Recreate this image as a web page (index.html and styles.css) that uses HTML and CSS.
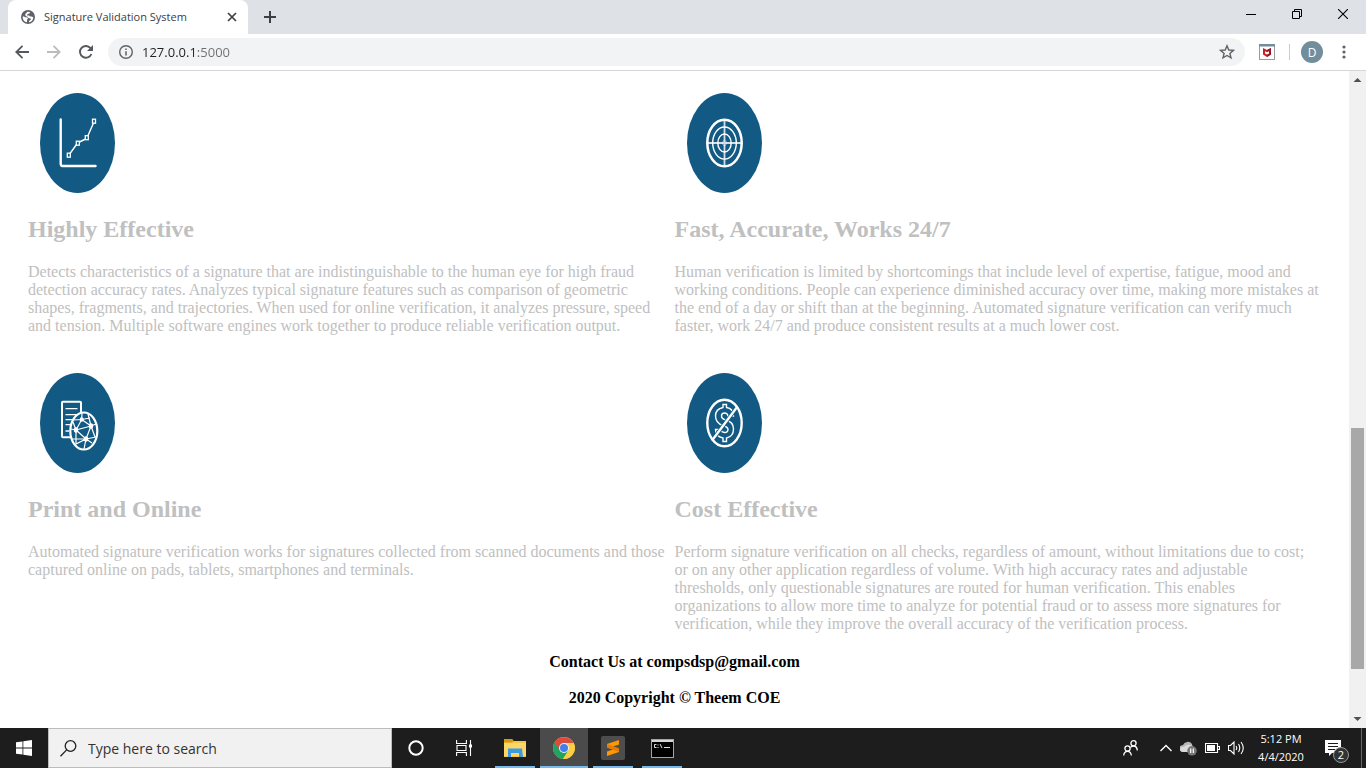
FILE: index.html
```html
<!DOCTYPE html>
<html lang="en">
<head>
<meta charset="utf-8">
<title>Signature Validation System</title>
<link rel="stylesheet" href="styles.css">
</head>
<body>
<div class="desktop">
  <header class="tabstrip">
    <div class="tab">
      <svg class="favicon" width="14" height="14" viewBox="0 0 14 14"><circle cx="7" cy="7" r="7" fill="#5f6368"/><path d="M2 6.2 4.500 7.200 6.500 7.500 7 9 6 9.500 6 12.300A5.400 5.400 0 0 1 1.700 7ZM6.500 1.800 9 2 8.500 3.500 6.500 4 6 5.500 8 5.500 9 6.500 11 6.500 12.300 7.500A5.400 5.400 0 0 1 8 12.300L8 11 10 9.500 9.500 8.500 7.500 8 6.500 6.800 4.500 6 4.300 4Z" fill="#fff"/></svg>
      <span class="tab-title">Signature Validation System</span>
      <button class="icon-btn tab-close" aria-label="Close tab"><svg width="10" height="10" viewBox="0 0 10 10"><path d="M1 1 9 9M9 1 1 9" stroke="#3c4043" stroke-width="1.700"/></svg></button>
    </div>
    <button class="icon-btn new-tab" aria-label="New tab"><svg width="12" height="12" viewBox="0 0 12 12"><path d="M6 0V12M0 6H12" stroke="#3c4043" stroke-width="2"/></svg></button>
    <div class="window-controls">
      <button class="icon-btn" aria-label="Minimize"><svg width="10" height="11" viewBox="0 0 10 11"><path d="M0 5.500H10" stroke="#000"/></svg></button>
      <button class="icon-btn" aria-label="Restore"><svg width="10" height="10" viewBox="0 0 10 10" fill="none" stroke="#000"><path d="M.5 2.500H7.500V9.500H.5ZM2.500 2.500V.5H9.500V7.500H7.500"/></svg></button>
      <button class="icon-btn" aria-label="Close window"><svg width="10" height="10" viewBox="0 0 10 10"><path d="M0 0 10 10M10 0 0 10" stroke="#000" stroke-width="1.100"/></svg></button>
    </div>
  </header>

  <nav class="toolbar" aria-label="Browser toolbar">
    <button class="icon-btn nav-btn" aria-label="Back"><svg width="14" height="14" viewBox="0 0 14 14"><path d="M14 7H1.500M7.500 .8 1.300 7 7.500 13.200" fill="none" stroke="#55585d" stroke-width="1.800"/></svg></button>
    <button class="icon-btn nav-btn" aria-label="Forward"><svg width="14" height="14" viewBox="0 0 14 14"><path d="M0 7H12.500M6.500 .8 12.700 7 6.500 13.200" fill="none" stroke="#babcbe" stroke-width="1.800"/></svg></button>
    <button class="icon-btn nav-btn" aria-label="Reload"><svg width="14" height="14" viewBox="0 0 14 14"><path d="M12.400 9A5.900 5.900 0 1 1 11.300 2.900L12.500 4.200" fill="none" stroke="#55585d" stroke-width="1.900"/><path d="M14 0V6H8Z" fill="#55585d"/></svg></button>
    <div class="omnibox">
      <svg width="14" height="14" viewBox="0 0 14 14"><circle cx="7" cy="7" r="6.300" fill="none" stroke="#5f6368" stroke-width="1.400"/><path d="M7 6.200V10.500M7 3.500V5" stroke="#5f6368" stroke-width="1.500"/></svg>
      <input class="url" type="text" aria-label="Address" value="127.0.0.1:5000">
      <button class="icon-btn" aria-label="Bookmark this page"><svg width="16" height="16" viewBox="0 0 16 16"><path d="M8 1.800 9.800 6 14.400 6.400 10.900 9.400 12 13.900 8 11.500 4 13.900 5.100 9.400 1.600 6.400 6.200 6Z" fill="none" stroke="#5f6368" stroke-width="1.400"/></svg></button>
    </div>
    <button class="icon-btn shield" aria-label="Security extension"><svg width="16" height="16" viewBox="0 0 16 16"><rect x=".5" y=".5" width="15" height="15" fill="#fff" stroke="#9a9da0"/><path d="M0 0H16V2.500H0Z" fill="#728e9b"/><path d="M4 4 8 6 12 4V10.500L8 13 4 10.500Z" fill="#c8202a"/><path d="M8 6 12 4V10.500L8 13V10.500L10 9.500V7.200L8 8.200Z" fill="#941a24"/><path d="M6 7.200 8 8.200 10 7.200V9.500L8 10.500 6 9.500Z" fill="#fff"/></svg></button>
    <span class="divider"></span>
    <button class="avatar" aria-label="Profile D">D</button>
    <button class="icon-btn menu" aria-label="Menu"><svg width="4" height="14" viewBox="0 0 4 14" fill="#5f6368"><circle cx="2" cy="2" r="1.600"/><circle cx="2" cy="7" r="1.600"/><circle cx="2" cy="12" r="1.600"/></svg></button>
  </nav>

  <div class="viewport">
    <main class="page">
      <section class="features">
        <article class="feature">
          <svg class="badge" width="75" height="100" viewBox="0 0 75 100" fill="none"><ellipse cx="37.500" cy="50" rx="37.500" ry="50" fill="#125a83"/><path d="M20.700 26.500V70.500Q20.700 73 22.500 73H55.500" stroke="#fff" stroke-width="2.400" stroke-linecap="round"/><path d="M30 60.500 36.500 51.500M39.500 49 45.500 46M48 42.500 53.500 30" stroke="#fff" stroke-width="1.400"/><g stroke="#fff" stroke-width="1.300"><rect x="27.300" y="60.200" width="3" height="4"/><rect x="36.300" y="48.200" width="3" height="4"/><rect x="45.300" y="42.700" width="3" height="4"/><rect x="52.500" y="26.200" width="3" height="4"/></g></svg>
          <h2>Highly Effective</h2>
          <p>Detects characteristics of a signature that are indistinguishable to the human eye for high fraud detection accuracy rates. Analyzes typical signature features such as comparison of geometric shapes, fragments, and trajectories. When used for online verification, it analyzes pressure, speed and tension. Multiple software engines work together to produce reliable verification output.</p>
        </article>
        <article class="feature">
          <svg class="badge" width="75" height="100" viewBox="0 0 75 100" fill="none" stroke="#fff"><ellipse cx="37.500" cy="50" rx="37.500" ry="50" fill="#125a83" stroke="none"/><ellipse cx="37.500" cy="50" rx="17.200" ry="23.300" stroke-width="2.500"/><ellipse cx="37.500" cy="50" rx="11.800" ry="16" stroke-width="1.400"/><ellipse cx="37.500" cy="50" rx="6.700" ry="9" stroke-width="1.400"/><ellipse cx="37.500" cy="50" rx="2" ry="2.700" stroke-width=".7" opacity=".6"/><path d="M37.500 27V73M20.500 50H54.500" stroke-width="1.800" opacity=".8"/></svg>
          <h2>Fast, Accurate, Works 24/7</h2>
          <p>Human verification is limited by shortcomings that include level of expertise, fatigue, mood and working conditions. People can experience diminished accuracy over time, making more mistakes at the end of a day or shift than at the beginning. Automated signature verification can verify much faster, work 24/7 and produce consistent results at a much lower cost.</p>
        </article>
        <article class="feature">
          <svg class="badge" width="75" height="100" viewBox="0 0 75 100" fill="none" stroke="#fff"><ellipse cx="37.500" cy="50" rx="37.500" ry="50" fill="#125a83" stroke="none"/><rect x="22" y="28.800" width="19" height="35.500" rx="1" stroke-width="2"/><path d="M25.500 35.700H37.500M25.500 41.700H37.500M25.500 46.700H33M25.500 51.700H31M25.500 58H29" stroke-width="1.300"/><ellipse cx="43.800" cy="58" rx="13.500" ry="18.500" fill="#125a83" stroke-width="2.200"/><path d="M33 47 41.700 46.500 50 45M41.700 46.500 36 57 46 66 51 53 41.700 46.500M36 57 51 53 56 51M36 57 31 56M36 57 36 71 46 66 52 70M36 57 33 49M46 66 44 76M51 53 55 64M41.700 46.500 42 40M51 53 48 41M46 66 56 64M46 66 32 66" stroke-width="1.200"/><g fill="#fff" stroke="none"><ellipse cx="41.700" cy="46.500" rx="2" ry="2.300"/><ellipse cx="36" cy="57" rx="2.200" ry="2.700"/><ellipse cx="51" cy="53" rx="2.200" ry="2.700"/><ellipse cx="46" cy="66" rx="2.200" ry="2.700"/></g></svg>
          <h2>Print and Online</h2>
          <p>Automated signature verification works for signatures collected from scanned documents and those captured online on pads, tablets, smartphones and terminals.</p>
        </article>
        <article class="feature">
          <svg class="badge" width="75" height="100" viewBox="0 0 75 100" fill="none" stroke="#fff"><ellipse cx="37.500" cy="50" rx="37.500" ry="50" fill="#125a83" stroke="none"/><ellipse cx="37.500" cy="50" rx="17.200" ry="23.300" stroke-width="2.400"/><path d="M36 31.500H39.500V34.500Q46.500 35.500 46.500 43H41Q40.500 40 37.500 40 34.500 40 34.500 43 34.500 46 39 47 46.500 49 46.500 56 46.500 63.500 39.500 65V68.500H36V65Q28.500 63.500 28.500 56.500H34Q34.500 59.500 37.500 59.500 41 59.500 41 56.500 41 54 36 52.500 28.500 50 28.500 43 28.500 36 36 34.500Z" stroke-width="1.400"/><path d="M27 65 49 35.500" stroke="#125a83" stroke-width="4"/><path d="M25 67.500 50.500 33.500" stroke-width="2.300"/></svg>
          <h2>Cost Effective</h2>
          <p>Perform signature verification on all checks, regardless of amount, without limitations due to cost; or on any other application regardless of volume. With high accuracy rates and adjustable thresholds, only questionable signatures are routed for human verification. This enables organizations to allow more time to analyze for potential fraud or to assess more signatures for verification, while they improve the overall accuracy of the verification process.</p>
        </article>
      </section>
      <footer class="page-footer">
        <p>Contact Us at compsdsp@gmail.com</p>
        <p>2020 Copyright © Theem COE</p>
      </footer>
    </main>
    <div class="scrollbar" aria-hidden="true">
      <svg width="17" height="17" viewBox="0 0 17 17"><path d="M4.500 11 8.500 7 12.500 11Z" fill="#505050"/></svg>
      <div class="track"><div class="thumb"></div></div>
      <svg width="17" height="17" viewBox="0 0 17 17"><path d="M4.500 6 8.500 10 12.500 6Z" fill="#505050"/></svg>
    </div>
  </div>

  <footer class="taskbar">
    <button class="task" aria-label="Start"><svg width="16" height="16" viewBox="0 0 16 16" fill="#fff"><path d="M0 2.300 6.500 1.400V7.500H0ZM7.300 1.300 16 0V7.500H7.300ZM0 8.400H6.500V14.600L0 13.700ZM7.300 8.400H16V16L7.300 14.700Z"/></svg></button>
    <label class="search">
      <svg width="17" height="17" viewBox="0 0 17 17"><circle cx="10.500" cy="6" r="5.300" fill="none" stroke="#222" stroke-width="1.300"/><path d="M6.600 9.900.5 16.300" stroke="#222" stroke-width="1.300"/></svg>
      <input type="text" aria-label="Search" placeholder="Type here to search">
    </label>
    <button class="task" aria-label="Cortana"><svg width="16" height="16" viewBox="0 0 16 16"><circle cx="8" cy="8" r="6.700" fill="none" stroke="#fff" stroke-width="2"/></svg></button>
    <button class="task" aria-label="Task view"><svg width="16" height="16" viewBox="0 0 16 16" fill="none" stroke="#fff" stroke-width="1.100"><path d="M.6 0V3.500H10.400V0M1 5.500H10V10.500H1ZM.6 16V12.500H10.400V16M14.500 0V16"/><path d="M13 4.500H16V7.500H13Z" fill="#fff" stroke="none"/></svg></button>
    <div class="running">
      <button class="task open" aria-label="File Explorer"><svg width="22" height="18" viewBox="0 0 22 18"><path d="M0 0H8L9.500 2H22V18H0Z" fill="#f7c744"/><path d="M0 0H8L9.500 2 8 3.500H0Z" fill="#d69a12"/><path d="M0 4H22V17H0Z" fill="#fbd768"/><path d="M4 9.500H18L19 18H15V14H7V18H4Z" fill="#3d9ae0"/></svg></button>
      <button class="task open active" aria-label="Chrome"><svg width="22" height="22" viewBox="0 0 22 22"><circle cx="11" cy="11" r="11" fill="#e8b92f"/><path d="M11 11 1.500 5.500A11 11 0 0 0 10 22L15.500 13.500Z" fill="#20a464"/><path d="M1.500 5.500A11 11 0 0 1 20.600 6H11L6.500 13Z" fill="#dc4b3e"/><path d="M11 6H20.600A11 11 0 0 1 10 22L15.700 13Z" fill="#fcce45"/><circle cx="11" cy="11" r="5" fill="#f1f1f1"/><circle cx="11" cy="11" r="4" fill="#447ee8"/></svg></button>
      <button class="task open" aria-label="Sublime Text"><svg width="24" height="24" viewBox="0 0 24 24"><rect width="24" height="24" rx="2" fill="#4d4d4d"/><path d="M6 8 18 4V8.500L12 10.500 18 12.500V16L6 20V15.500L12 13.500 6 11.500Z" fill="#ff9800"/><path d="M6 8 18 12.500V16L6 11.500Z" fill="#e27d05"/></svg></button>
      <button class="task open" aria-label="Command Prompt"><svg width="23" height="19" viewBox="0 0 23 19"><rect x=".5" y=".5" width="22" height="18" fill="#000" stroke="#a5a5a5"/><path d="M1 1H22V3H1Z" fill="#d5d5d5"/><path d="M5.500 5.500H3.500V8.500H5.500M7 5.500V6.500M7 8V9M9 5 11 9M13 8.500H19" fill="none" stroke="#ddd"/></svg></button>
    </div>
    <div class="tray">
      <button class="icon-btn" aria-label="People"><svg width="15" height="16" viewBox="0 0 15 16" fill="none" stroke="#fff" stroke-width="1.300"><circle cx="10.500" cy="3.300" r="2.600"/><circle cx="4.500" cy="8.500" r="2.600"/><path d="M.7 15.500Q1 11.300 4.500 11.300T8.300 15.500M7.500 7.500Q8.500 6 10.500 6 14 6 14.300 10.500"/></svg></button>
      <button class="icon-btn chevron" aria-label="Show hidden icons"><svg width="12" height="8" viewBox="0 0 12 8"><path d="M.5 7 6 1.500 11.500 7" fill="none" stroke="#fff" stroke-width="1.400"/></svg></button>
      <button class="icon-btn" aria-label="OneDrive"><svg width="17" height="15" viewBox="0 0 17 15"><path d="M4 11A4 3.500 0 0 1 3 4 5 4.500 0 0 1 12 3L13 11Z" fill="#b6b6b6"/><path d="M0 8Q1 5 4 6 7 2 13 5V11H4Q0 11 0 8Z" fill="#dadada"/><circle cx="12" cy="9.800" r="4.800" fill="#777"/><path d="M10.700 7.500V12M13.300 7.500V12" stroke="#fff" stroke-width="1.200"/></svg></button>
      <button class="icon-btn" aria-label="Battery"><svg width="15" height="10" viewBox="0 0 15 10"><path d="M.5 .5H12.500V9.500H.5ZM13 3.500H14.500V6.500H13" fill="none" stroke="#fff" stroke-width="1.100"/><path d="M2 2H10V8H2Z" fill="#fff"/></svg></button>
      <button class="icon-btn" aria-label="Volume"><svg width="17" height="14" viewBox="0 0 17 14" fill="none" stroke="#fff" stroke-width="1.100"><path d="M.5 4.500H2.500L6 1V13L2.500 9.500H.5ZM8 5Q9.500 7 8 9M10.500 3Q13 7 10.500 11M13 1Q17.500 7 13 13"/></svg></button>
      <time class="clock"><span>5:12 PM</span><span>4/4/2020</span></time>
      <button class="icon-btn notices" aria-label="2 notifications"><svg width="16" height="16" viewBox="0 0 16 16"><path d="M0 0H16V13H7L4 16V13H0Z" fill="#fff"/><path d="M3 3.500H13M3 6.500H13M3 9.500H10" stroke="#1c1c1c"/></svg><span class="count">2</span></button>
    </div>
    <button class="show-desktop" aria-label="Show desktop"></button>
  </footer>
</div>
</body>
</html>
```
FILE: styles.css
```css
* { box-sizing: border-box; }
body { margin: 0; background: #fff; }
button, input { font: inherit; border: 0; padding: 0; background: none; }
svg { display: block; flex: none; }

.desktop { display: flex; flex-direction: column; height: 100vh; font-family: "Open Sans", "Noto Sans", sans-serif; }
.icon-btn { display: flex; align-items: center; justify-content: center; flex: none; }

/* Browser window */
.tabstrip { display: flex; flex: none; height: 34px; padding-left: 8px; background: #dee1e6; }
.tab { display: flex; align-items: center; width: 240px; padding: 0 11px 0 13px; background: #fff; border-radius: 8px 8px 0 0; }
.tab-title { flex: 1; margin-left: 9px; padding-bottom: 2px; font-size: 11px; color: #3c4043; white-space: nowrap; }
.new-tab { width: 44px; }
.window-controls { display: flex; height: 28px; margin-left: auto; }
.window-controls .icon-btn { width: 46px; }

.toolbar { display: flex; align-items: center; flex: none; height: 37px; padding: 0 12px 0 6px; border-bottom: 1px solid #d4d6d9; background: #fff; }
.nav-btn { width: 32px; height: 28px; }
.omnibox { display: flex; align-items: center; flex: 1; height: 28px; margin-left: 6px; padding: 0 10px 0 11px; border-radius: 14px; background: #f1f3f4; }
.url { flex: 1; min-width: 0; margin-left: 9px; font-size: 13px; color: transparent; background: linear-gradient(to right, #202124 52px, #6b7075 52px); background-clip: text; -webkit-background-clip: text; }
.shield { width: 44px; }
.divider { width: 1px; height: 16px; background: #c9ccd0; }
.avatar { width: 22px; height: 22px; margin: 0 11px; border-radius: 50%; background: #728e9b; color: #fff; font-size: 12px; text-align: center; }
.menu { width: 20px; height: 28px; }

/* Web page */
.viewport { display: flex; flex: 1; min-height: 0; }
.page { flex: 1; overflow: hidden; padding: 22px 28px 0; font: 16px/18px "Liberation Serif", "Times New Roman", serif; }
.features { display: grid; grid-template-columns: 1fr 1fr; row-gap: 38px; color: #c0c0c0; }
.badge { margin-left: 12px; }
.feature h2 { margin: 22px 0 20px; font-size: 24px; line-height: 28px; }
.feature p { margin: 0; }
.page-footer { padding-top: 20px; text-align: center; font-weight: bold; color: #000; }
.page-footer p { margin: 0 0 18px; }
.scrollbar { display: flex; flex-direction: column; flex: none; width: 17px; background: #f1f1f1; }
.track { display: grid; grid-template-rows: 340fr 241fr 42fr; flex: 1; padding: 0 2px; }
.thumb { grid-row: 2; background: #a8a8a8; }

/* Taskbar */
.taskbar { display: flex; flex: none; height: 40px; background: #1d1d1d; color: #fff; }
.task { display: flex; align-items: center; justify-content: center; width: 48px; }
.running { display: flex; gap: 1px; margin-left: 3px; }
.open { background: linear-gradient(#76b9ed, #76b9ed) bottom / 40px 2px no-repeat; }
.open.active { background-color: #4b4b4b; background-size: 100% 2px; }
.search { display: flex; align-items: center; width: 344px; padding-left: 11px; background: #f1f1f1; border: 1px solid #bcbcbc; }
.search input { flex: 1; min-width: 0; margin-left: 11px; font-size: 14px; color: #333; }
.search input::placeholder { color: #333; opacity: 1; }
.tray { display: flex; align-items: center; gap: 8px; margin-left: auto; padding-right: 20px; }
.chevron { margin-left: 14px; }
.clock { display: flex; flex-direction: column; width: 56px; text-align: center; font-size: 11px; line-height: 18px; }
.notices { position: relative; margin-left: 8px; }
.count { position: absolute; left: 8px; top: 7px; width: 16px; height: 16px; border: 1px solid #999; border-radius: 50%; background: #333; color: #fff; font-size: 11px; line-height: 14px; text-align: center; }
.show-desktop { width: 5px; border-left: 1px solid #666; }
```
